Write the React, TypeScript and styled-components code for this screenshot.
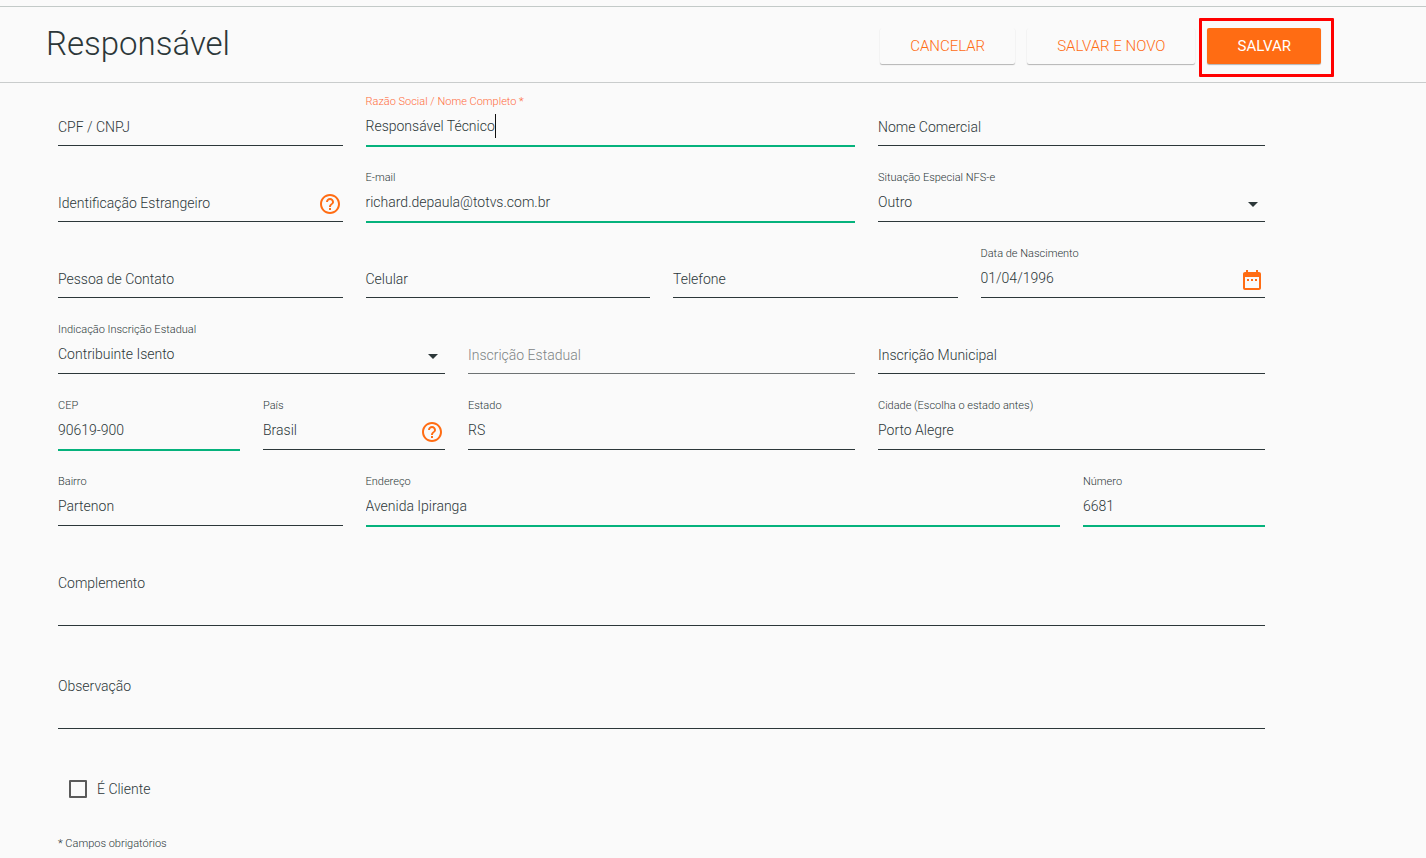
import React from 'react';
import styled, { createGlobalStyle, css } from 'styled-components';
import { MdArrowDropDown, MdDateRange, MdHelpOutline } from 'react-icons/md';

const ink = '#2c3739';
const orange = '#ff6c13';
const green = '#05b27c';

const GlobalStyle = createGlobalStyle`
  *, *::before, *::after { box-sizing: border-box; }
  body {
    margin: 0;
    background: #fafafa;
    color: ${ink};
    font-family: Roboto, 'Open Sans', sans-serif;
    font-weight: 300;
    font-size: 14px;
  }
  button, input, select, textarea {
    font: inherit;
    color: inherit;
  }
`;

const Page = styled.main`
  padding-top: 6px;
`;

const Header = styled.header`
  display: flex;
  align-items: center;
  justify-content: space-between;
  height: 77px;
  padding: 2px 105px 0 46px;
  border-top: 1px solid #c3cac8;
  border-bottom: 1px solid #c9cccc;
`;

const Title = styled.h1`
  margin: 0;
  padding-bottom: 4px;
  font-size: 33px;
  line-height: 48px;
  font-weight: 300;
`;

const Actions = styled.div`
  display: flex;
  gap: 12px;
`;

const Button = styled.button<{ $primary?: boolean }>`
  height: 36px;
  padding: 0 30px;
  border: 0;
  border-radius: 2px;
  background: ${(p) => (p.$primary ? orange : '#fafafa')};
  color: ${(p) => (p.$primary ? '#fff' : orange)};
  font-size: 15px;
  font-weight: ${(p) => (p.$primary ? 400 : 300)};
  text-transform: uppercase;
  white-space: nowrap;
  box-shadow: 0 1px 1px rgba(0, 0, 0, 0.28);
`;

const Highlighted = styled.div`
  position: relative;

  &::after {
    content: '';
    position: absolute;
    inset: -10px -13px -13px -8px;
    border: 3px solid #f00;
    border-radius: 1px;
    pointer-events: none;
  }
`;

const Form = styled.form`
  padding: 10px 161px 6px 58px;
`;

const Grid = styled.div`
  display: grid;
  grid-template-columns: repeat(12, minmax(0, 1fr));
  gap: 23px;
`;

const Field = styled.div<{ $span: number; $valid?: boolean; $disabled?: boolean }>`
  grid-column: span ${(p) => p.$span};
  display: grid;
  grid-template-columns: minmax(0, 1fr);
  grid-template-rows: 16px 36px;
  height: 53px;
  border-bottom: 1px solid ${(p) => (p.$valid ? green : ink)};
  ${(p) => p.$valid && css`box-shadow: 0 1px 0 ${green};`}
  ${(p) => p.$disabled && css`color: #7d8485; border-color: #6d7273;`}
`;

const Label = styled.label<{ $floating: boolean; $focused?: boolean }>`
  grid-area: ${(p) => (p.$floating ? '1 / 1' : '2 / 1')};
  align-self: start;
  padding-top: ${(p) => (p.$floating ? 0 : 6)}px;
  font-size: ${(p) => (p.$floating ? 11 : 14)}px;
  line-height: ${(p) => (p.$floating ? 18 : 24)}px;
  color: ${(p) => (p.$focused ? '#ff6c3c' : 'inherit')};
  white-space: nowrap;
  pointer-events: none;
`;

const control = css`
  width: 100%;
  min-width: 0;
  height: 34px;
  padding: 0 0 1px;
  border: 0;
  outline: 0;
  border-radius: 0;
  background: transparent;
  line-height: 24px;
`;

const InputLine = styled.div`
  grid-area: 2 / 1;
  display: flex;
`;

const Input = styled.input<{ $hug?: boolean }>`
  ${control}
  ${(p) => p.$hug && css`width: auto; field-sizing: content;`}
`;

const Select = styled.select`
  ${control}
  appearance: none;
`;

const Caret = styled.span`
  width: 1px;
  height: 24px;
  margin-top: 5px;
  background: #111;
`;

const FieldIcon = styled.span<{ $dark?: boolean }>`
  grid-area: 2 / 1;
  justify-self: end;
  align-self: start;
  display: flex;
  padding: 7px ${(p) => (p.$dark ? 0 : 1)}px 0 0;
  font-size: 24px;
  color: ${(p) => (p.$dark ? ink : orange)};
  pointer-events: none;
`;

const Notes = styled.div`
  display: grid;
  gap: 23px;
  margin-top: 20px;
`;

const NoteField = styled.div`
  display: grid;
  height: 80px;
  border-bottom: 1px solid ${ink};
`;

const NoteLabel = styled.label`
  grid-area: 1 / 1;
  padding-top: 25px;
  line-height: 24px;
  pointer-events: none;
`;

const TextArea = styled.textarea`
  grid-area: 1 / 1;
  width: 100%;
  height: 79px;
  padding: 25px 0 0;
  border: 0;
  outline: 0;
  resize: none;
  background: transparent;
  line-height: 24px;
`;

const CheckRow = styled.label`
  display: flex;
  align-items: center;
  gap: 10px;
  width: max-content;
  margin: 48px 0 0 11px;
  line-height: 24px;
`;

const Checkbox = styled.input`
  appearance: none;
  width: 18px;
  height: 18px;
  margin: 0;
  border: 2px solid #5a5a5a;
  border-radius: 1px;

  &:checked { background: ${orange}; }
`;

const Footnote = styled.p`
  margin: 35px 0 0;
  font-size: 11px;
  line-height: 16px;
`;

type FieldSpec = {
  id: string;
  label: string;
  span: number;
  value?: string;
  valid?: boolean;
  focused?: boolean;
  disabled?: boolean;
  kind?: 'select';
  icon?: 'help' | 'date';
};

const fields: FieldSpec[] = [
  { id: 'cpf', label: 'CPF / CNPJ', span: 3 },
  { id: 'razao', label: 'Razão Social / Nome Completo *', span: 5, value: 'Responsável Técnico', valid: true, focused: true },
  { id: 'comercial', label: 'Nome Comercial', span: 4 },
  { id: 'estrangeiro', label: 'Identificação Estrangeiro', span: 3, icon: 'help' },
  { id: 'email', label: 'E-mail', span: 5, value: 'richard.depaula@totvs.com.br', valid: true },
  { id: 'situacao', label: 'Situação Especial NFS-e', span: 4, value: 'Outro', kind: 'select' },
  { id: 'contato', label: 'Pessoa de Contato', span: 3 },
  { id: 'celular', label: 'Celular', span: 3 },
  { id: 'telefone', label: 'Telefone', span: 3 },
  { id: 'nascimento', label: 'Data de Nascimento', span: 3, value: '01/04/1996', icon: 'date' },
  { id: 'indicacao', label: 'Indicação Inscrição Estadual', span: 4, value: 'Contribuinte Isento', kind: 'select' },
  { id: 'ie', label: 'Inscrição Estadual', span: 4, disabled: true },
  { id: 'im', label: 'Inscrição Municipal', span: 4 },
  { id: 'cep', label: 'CEP', span: 2, value: '90619-900', valid: true },
  { id: 'pais', label: 'País', span: 2, value: 'Brasil', icon: 'help' },
  { id: 'estado', label: 'Estado', span: 4, value: 'RS' },
  { id: 'cidade', label: 'Cidade (Escolha o estado antes)', span: 4, value: 'Porto Alegre' },
  { id: 'bairro', label: 'Bairro', span: 3, value: 'Partenon' },
  { id: 'endereco', label: 'Endereço', span: 7, value: 'Avenida Ipiranga', valid: true },
  { id: 'numero', label: 'Número', span: 2, value: '6681', valid: true },
];

function FormField({ id, label, span, value, valid, focused, disabled, kind, icon }: FieldSpec) {
  return (
    <Field $span={span} $valid={valid} $disabled={disabled}>
      <InputLine>
        {kind === 'select' ? (
          <Select id={id} defaultValue={value}>
            <option>{value}</option>
          </Select>
        ) : (
          <Input id={id} type="text" defaultValue={value} disabled={disabled} $hug={focused} />
        )}
        {focused && <Caret />}
      </InputLine>
      <Label htmlFor={id} $floating={Boolean(value)} $focused={focused}>{label}</Label>
      {kind === 'select' && <FieldIcon $dark><MdArrowDropDown /></FieldIcon>}
      {icon && <FieldIcon>{icon === 'help' ? <MdHelpOutline /> : <MdDateRange />}</FieldIcon>}
    </Field>
  );
}

export default function App() {
  return (
    <Page>
      <GlobalStyle />
      <Header>
        <Title>Responsável</Title>
        <Actions>
          <Button type="button">Cancelar</Button>
          <Button type="button">Salvar e novo</Button>
          <Highlighted>
            <Button type="submit" form="responsavel" $primary>Salvar</Button>
          </Highlighted>
        </Actions>
      </Header>
      <Form id="responsavel" onSubmit={(e) => e.preventDefault()}>
        <Grid>
          {fields.map((f) => <FormField key={f.id} {...f} />)}
        </Grid>
        <Notes>
          <NoteField>
            <TextArea id="complemento" />
            <NoteLabel htmlFor="complemento">Complemento</NoteLabel>
          </NoteField>
          <NoteField>
            <TextArea id="observacao" />
            <NoteLabel htmlFor="observacao">Observação</NoteLabel>
          </NoteField>
        </Notes>
        <CheckRow>
          <Checkbox type="checkbox" />
          É Cliente
        </CheckRow>
        <Footnote>* Campos obrigatórios</Footnote>
      </Form>
    </Page>
  );
}
